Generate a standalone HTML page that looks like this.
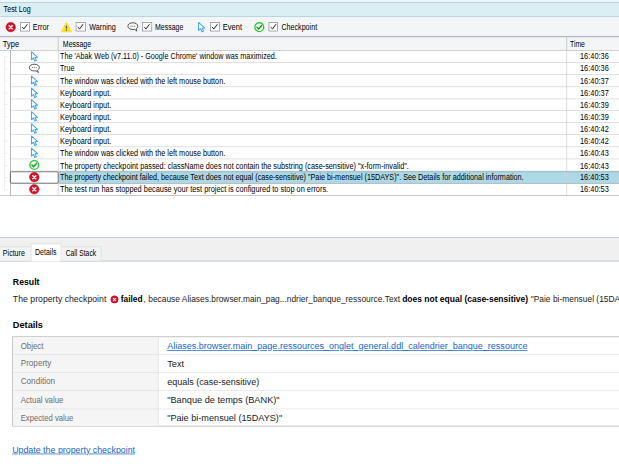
<!DOCTYPE html>
<html><head><meta charset="utf-8"><title>Test Log</title>
<style>
html,body{margin:0;padding:0;background:#fff;}
body{width:619px;height:464px;position:relative;overflow:hidden;}
#w{position:absolute;left:0;top:0;width:867px;height:650px;transform:scale(0.7143);transform-origin:0 0;font-family:"Liberation Sans",sans-serif;font-size:11.6px;color:#000;background:#fff;overflow:hidden}
.a{position:absolute;white-space:nowrap;}
.t{position:absolute;white-space:pre;line-height:1;transform-origin:0 0;}
.ic{position:absolute;display:block;}
.cb{position:absolute;width:11.3px;height:11.3px;border:1px solid #7f889c;background:#fff;box-shadow:0 0 0 1px #fbfbfc}
.cb svg{position:absolute;left:0;top:0;}
.u{text-decoration:underline;color:#1466c8;}
b{font-weight:bold}
</style></head><body><div id="w">

<div class="a" style="left:0px;top:0px;width:867px;height:3.3px;background:#f1f6f9"></div>
<div class="a" style="left:0px;top:3.3px;width:867px;height:20.2px;background:#dbeef3"></div>
<div class="a" style="left:0px;top:3.2px;width:867px;height:1px;background:#a4c9da"></div>
<div class="a" style="left:0px;top:22.5px;width:867px;height:1.1px;background:#8fbdd1"></div>
<div class="a" style="left:0px;top:23.6px;width:867px;height:28px;background:#f4f5f7"></div>
<svg class="ic" style="left:6.70px;top:29.80px" width="16" height="16" viewBox="0 0 16 16"><circle cx="8" cy="8" r="6.6" fill="#d3132b" stroke="#b4001a" stroke-width="0.8"/><path d="M5.9 5.9 L10.1 10.1 M10.1 5.9 L5.9 10.1" stroke="#fff" stroke-width="2.0" stroke-linecap="round"/></svg>
<div class="cb" style="left:28.49px;top:31.08px"><svg width="11" height="11" viewBox="0 0 11 11"><path d="M1.9 6.0 L4.5 8.5 L9.3 1.9" stroke="#151515" stroke-width="1.35" fill="none"/></svg></div>
<svg class="ic" style="left:84.96px;top:29.80px" width="16" height="16" viewBox="0 0 16 16"><path d="M8 1.6 L15 14.4 L1 14.4 Z" fill="#ffe01f" stroke="#ffe01f" stroke-width="1.4" stroke-linejoin="round"/><path d="M8 6 L8 10.2" stroke="#4c5a8c" stroke-width="1.7"/><circle cx="8" cy="12.3" r="1" fill="#4c5a8c"/></svg>
<div class="cb" style="left:106.33px;top:31.08px"><svg width="11" height="11" viewBox="0 0 11 11"><path d="M1.9 6.0 L4.5 8.5 L9.3 1.9" stroke="#151515" stroke-width="1.35" fill="none"/></svg></div>
<svg class="ic" style="left:178.20px;top:29.80px" width="16" height="16" viewBox="0 0 16 16"><path d="M8 1.9 C4 1.9 1 3.9 1 6.6 C1 9.3 4 11.3 8 11.3 C8.8 11.3 9.6 11.2 10.3 11.1 L13.8 13.5 L12.5 10.4 C14.1 9.5 15 8.2 15 6.6 C15 3.9 12 1.9 8 1.9 Z" fill="#fdfdfd" stroke="#4a4a4a" stroke-width="1.35" stroke-linejoin="round"/><circle cx="5.3" cy="6.6" r="0.8" fill="#666"/><circle cx="8" cy="6.6" r="0.8" fill="#666"/><circle cx="10.7" cy="6.6" r="0.8" fill="#666"/></svg>
<div class="cb" style="left:199.43px;top:31.08px"><svg width="11" height="11" viewBox="0 0 11 11"><path d="M1.9 6.0 L4.5 8.5 L9.3 1.9" stroke="#151515" stroke-width="1.35" fill="none"/></svg></div>
<svg class="ic" style="left:274.10px;top:29.80px" width="16" height="16" viewBox="0 0 16 16"><path d="M4 1.4 L4 12.6 L6.8 10.2 L8.8 14.6 L10.9 13.6 L9 9.4 L12.6 9.2 Z" fill="#fff" stroke="#3aa4ef" stroke-width="1.4" stroke-linejoin="round"/></svg>
<div class="cb" style="left:294.49px;top:31.08px"><svg width="11" height="11" viewBox="0 0 11 11"><path d="M1.9 6.0 L4.5 8.5 L9.3 1.9" stroke="#151515" stroke-width="1.35" fill="none"/></svg></div>
<svg class="ic" style="left:354.60px;top:29.80px" width="16" height="16" viewBox="0 0 16 16"><circle cx="8" cy="8" r="6.2" fill="#fff" stroke="#2ec63a" stroke-width="1.9"/><path d="M4.8 8.2 L7.1 10.5 L11.3 5.6" stroke="#18a824" stroke-width="2.3" fill="none" stroke-linecap="round" stroke-linejoin="round"/></svg>
<div class="cb" style="left:375.97px;top:31.08px"><svg width="11" height="11" viewBox="0 0 11 11"><path d="M1.9 6.0 L4.5 8.5 L9.3 1.9" stroke="#151515" stroke-width="1.35" fill="none"/></svg></div>
<div class="a" style="left:0px;top:49.5px;width:867px;height:2px;background:#e6e8ec"></div>
<div class="a" style="left:0px;top:51.2px;width:867px;height:19.5px;background:#f4f5f6;border-top:1.2px solid #8d94a6;border-bottom:1px solid #c0c0c0;box-sizing:border-box"></div>
<div class="a" style="left:81.2px;top:52.2px;width:1px;height:18.5px;background:#b8b8b8"></div>
<div class="a" style="left:792.8px;top:52.2px;width:1px;height:18.5px;background:#b8b8b8"></div>
<div class="a" style="left:15px;top:86.74px;width:852px;height:1px;background:#d4d4d4"></div>
<svg class="ic" style="left:40.02px;top:70.74px" width="16" height="16" viewBox="0 0 16 16"><path d="M4 1.4 L4 12.6 L6.8 10.2 L8.8 14.6 L10.9 13.6 L9 9.4 L12.6 9.2 Z" fill="#fff" stroke="#3aa4ef" stroke-width="1.4" stroke-linejoin="round"/></svg>
<div class="a" style="left:6.3px;top:78.74px;width:5.5px;height:1px;background:#e9e9e9"></div>
<div class="a" style="left:15px;top:103.673px;width:852px;height:1px;background:#d4d4d4"></div>
<svg class="ic" style="left:40.02px;top:87.67px" width="16" height="16" viewBox="0 0 16 16"><path d="M8 1.9 C4 1.9 1 3.9 1 6.6 C1 9.3 4 11.3 8 11.3 C8.8 11.3 9.6 11.2 10.3 11.1 L13.8 13.5 L12.5 10.4 C14.1 9.5 15 8.2 15 6.6 C15 3.9 12 1.9 8 1.9 Z" fill="#fdfdfd" stroke="#4a4a4a" stroke-width="1.35" stroke-linejoin="round"/><circle cx="5.3" cy="6.6" r="0.8" fill="#666"/><circle cx="8" cy="6.6" r="0.8" fill="#666"/><circle cx="10.7" cy="6.6" r="0.8" fill="#666"/></svg>
<div class="a" style="left:6.3px;top:95.673px;width:5.5px;height:1px;background:#e9e9e9"></div>
<div class="a" style="left:15px;top:120.606px;width:852px;height:1px;background:#d4d4d4"></div>
<svg class="ic" style="left:40.02px;top:104.61px" width="16" height="16" viewBox="0 0 16 16"><path d="M4 1.4 L4 12.6 L6.8 10.2 L8.8 14.6 L10.9 13.6 L9 9.4 L12.6 9.2 Z" fill="#fff" stroke="#3aa4ef" stroke-width="1.4" stroke-linejoin="round"/></svg>
<div class="a" style="left:6.3px;top:112.606px;width:5.5px;height:1px;background:#e9e9e9"></div>
<div class="a" style="left:15px;top:137.539px;width:852px;height:1px;background:#d4d4d4"></div>
<svg class="ic" style="left:40.02px;top:121.54px" width="16" height="16" viewBox="0 0 16 16"><path d="M4 1.4 L4 12.6 L6.8 10.2 L8.8 14.6 L10.9 13.6 L9 9.4 L12.6 9.2 Z" fill="#fff" stroke="#3aa4ef" stroke-width="1.4" stroke-linejoin="round"/></svg>
<div class="a" style="left:6.3px;top:129.539px;width:5.5px;height:1px;background:#e9e9e9"></div>
<div class="a" style="left:15px;top:154.47199999999998px;width:852px;height:1px;background:#d4d4d4"></div>
<svg class="ic" style="left:40.02px;top:138.47px" width="16" height="16" viewBox="0 0 16 16"><path d="M4 1.4 L4 12.6 L6.8 10.2 L8.8 14.6 L10.9 13.6 L9 9.4 L12.6 9.2 Z" fill="#fff" stroke="#3aa4ef" stroke-width="1.4" stroke-linejoin="round"/></svg>
<div class="a" style="left:6.3px;top:146.47199999999998px;width:5.5px;height:1px;background:#e9e9e9"></div>
<div class="a" style="left:15px;top:171.40499999999997px;width:852px;height:1px;background:#d4d4d4"></div>
<svg class="ic" style="left:40.02px;top:155.40px" width="16" height="16" viewBox="0 0 16 16"><path d="M4 1.4 L4 12.6 L6.8 10.2 L8.8 14.6 L10.9 13.6 L9 9.4 L12.6 9.2 Z" fill="#fff" stroke="#3aa4ef" stroke-width="1.4" stroke-linejoin="round"/></svg>
<div class="a" style="left:6.3px;top:163.40499999999997px;width:5.5px;height:1px;background:#e9e9e9"></div>
<div class="a" style="left:15px;top:188.338px;width:852px;height:1px;background:#d4d4d4"></div>
<svg class="ic" style="left:40.02px;top:172.34px" width="16" height="16" viewBox="0 0 16 16"><path d="M4 1.4 L4 12.6 L6.8 10.2 L8.8 14.6 L10.9 13.6 L9 9.4 L12.6 9.2 Z" fill="#fff" stroke="#3aa4ef" stroke-width="1.4" stroke-linejoin="round"/></svg>
<div class="a" style="left:6.3px;top:180.338px;width:5.5px;height:1px;background:#e9e9e9"></div>
<div class="a" style="left:15px;top:205.27100000000002px;width:852px;height:1px;background:#d4d4d4"></div>
<svg class="ic" style="left:40.02px;top:189.27px" width="16" height="16" viewBox="0 0 16 16"><path d="M4 1.4 L4 12.6 L6.8 10.2 L8.8 14.6 L10.9 13.6 L9 9.4 L12.6 9.2 Z" fill="#fff" stroke="#3aa4ef" stroke-width="1.4" stroke-linejoin="round"/></svg>
<div class="a" style="left:6.3px;top:197.27100000000002px;width:5.5px;height:1px;background:#e9e9e9"></div>
<div class="a" style="left:15px;top:222.204px;width:852px;height:1px;background:#d4d4d4"></div>
<svg class="ic" style="left:40.02px;top:206.20px" width="16" height="16" viewBox="0 0 16 16"><path d="M4 1.4 L4 12.6 L6.8 10.2 L8.8 14.6 L10.9 13.6 L9 9.4 L12.6 9.2 Z" fill="#fff" stroke="#3aa4ef" stroke-width="1.4" stroke-linejoin="round"/></svg>
<div class="a" style="left:6.3px;top:214.204px;width:5.5px;height:1px;background:#e9e9e9"></div>
<div class="a" style="left:15px;top:239.137px;width:852px;height:1px;background:#d4d4d4"></div>
<svg class="ic" style="left:40.02px;top:223.14px" width="16" height="16" viewBox="0 0 16 16"><circle cx="8" cy="8" r="6.2" fill="#fff" stroke="#2ec63a" stroke-width="1.9"/><path d="M4.8 8.2 L7.1 10.5 L11.3 5.6" stroke="#18a824" stroke-width="2.3" fill="none" stroke-linecap="round" stroke-linejoin="round"/></svg>
<div class="a" style="left:6.3px;top:231.137px;width:5.5px;height:1px;background:#e9e9e9"></div>
<div class="a" style="left:82px;top:240.07px;width:785px;height:16px;background:#add8e6"></div>
<div class="a" style="left:15px;top:256.07px;width:852px;height:1px;background:#d4d4d4"></div>
<svg class="ic" style="left:40.02px;top:240.07px" width="16" height="16" viewBox="0 0 16 16"><circle cx="8" cy="8" r="6.6" fill="#d3132b" stroke="#b4001a" stroke-width="0.8"/><path d="M5.9 5.9 L10.1 10.1 M10.1 5.9 L5.9 10.1" stroke="#fff" stroke-width="2.0" stroke-linecap="round"/></svg>
<div class="a" style="left:6.3px;top:248.07px;width:5.5px;height:1px;background:#e9e9e9"></div>
<div class="a" style="left:15px;top:273.003px;width:852px;height:1px;background:#d4d4d4"></div>
<svg class="ic" style="left:40.02px;top:257.00px" width="16" height="16" viewBox="0 0 16 16"><circle cx="8" cy="8" r="6.6" fill="#d3132b" stroke="#b4001a" stroke-width="0.8"/><path d="M5.9 5.9 L10.1 10.1 M10.1 5.9 L5.9 10.1" stroke="#fff" stroke-width="2.0" stroke-linecap="round"/></svg>
<div class="a" style="left:6.3px;top:265.003px;width:5.5px;height:1px;background:#e9e9e9"></div>
<div class="a" style="left:14.2px;top:69.74px;width:1px;height:204.196px;background:#9c9c9c"></div>
<div class="a" style="left:6.3px;top:78.74px;width:1px;height:186.263px;background:#e9e9e9"></div>
<div class="a" style="left:81.2px;top:70.74px;width:1px;height:203.196px;background:#cfcfcf"></div>
<div class="a" style="left:792.8px;top:70.74px;width:1px;height:203.196px;background:#cfcfcf"></div>
<div class="a" style="left:0px;top:272.936px;width:867px;height:1px;background:#bdbdbd"></div>
<div class="a" style="left:14.2px;top:240.07px;width:67.5px;height:17px;border:1px solid #4a4a4a;border-radius:2px;box-sizing:border-box"></div>
<div class="a" style="left:82px;top:239.87px;width:785px;height:1px;background:#8aa9b5"></div>
<div class="a" style="left:82px;top:256.07px;width:785px;height:1px;background:#8aa9b5"></div>
<div class="a" style="left:0px;top:332.0px;width:867px;height:34px;background:#f0f0f0;border-top:1px solid #b4bccf;border-bottom:1px solid #aab3c6;box-sizing:border-box"></div>
<div class="a" style="left:0px;top:345.0px;width:43px;height:20px;background:#f3f3f3;border-top:1px solid #dadada;box-sizing:border-box"></div>
<div class="a" style="left:43px;top:341.0px;width:43px;height:25px;background:#fff;border:1px solid #d5d5d5;border-bottom:none;box-sizing:border-box"></div>
<div class="a" style="left:86px;top:345.0px;width:56px;height:20px;background:#f3f3f3;border:1px solid #dadada;border-left:none;border-bottom:none;box-sizing:border-box"></div>
<svg class="ic" style="left:154.28px;top:412.58px" width="12.6" height="12.6" viewBox="0 0 16 16"><circle cx="8" cy="8" r="6.6" fill="#d3132b" stroke="#b4001a" stroke-width="0.8"/><path d="M5.9 5.9 L10.1 10.1 M10.1 5.9 L5.9 10.1" stroke="#fff" stroke-width="2.0" stroke-linecap="round"/></svg>
<div class="a" style="left:16.8px;top:470.68px;width:896.0px;height:126.42px;border:1px solid #ababab;box-sizing:border-box;background:#fff"></div>
<div class="a" style="left:17.78px;top:471.66px;width:204.4px;height:124.46px;background:#f5f5f5;border-right:1px solid #dcdcdc;box-sizing:border-box"></div>
<div class="a" style="left:17.78px;top:496.02px;width:868.0px;height:1.01px;background:#e2e2e2"></div>
<div class="a" style="left:17.78px;top:521.22px;width:868.0px;height:1.01px;background:#e2e2e2"></div>
<div class="a" style="left:17.78px;top:546.42px;width:868.0px;height:1.01px;background:#e2e2e2"></div>
<div class="a" style="left:17.78px;top:571.62px;width:868.0px;height:1.01px;background:#e2e2e2"></div>
<div class="t" style="left:4.9px;top:7.31px;font-size:12.2px;transform:scaleX(0.8217);">Test Log</div>
<div class="t" style="left:46.2px;top:31.53px;font-size:12.2px;transform:scaleX(0.8296);">Error</div>
<div class="t" style="left:124.88px;top:31.53px;font-size:12.2px;transform:scaleX(0.8244);">Warning</div>
<div class="t" style="left:217.0px;top:31.53px;font-size:12.2px;transform:scaleX(0.8000);">Message</div>
<div class="t" style="left:312.2px;top:31.53px;font-size:12.2px;transform:scaleX(0.8581);">Event</div>
<div class="t" style="left:393.82px;top:31.53px;font-size:12.2px;transform:scaleX(0.8193);">Checkpoint</div>
<div class="t" style="left:4.2px;top:55.61px;font-size:12.2px;transform:scaleX(0.8615);">Type</div>
<div class="t" style="left:87.5px;top:55.61px;font-size:12.2px;transform:scaleX(0.8000);">Message</div>
<div class="t" style="left:798.0px;top:55.61px;font-size:12.2px;transform:scaleX(0.7778);">Time</div>
<div class="t" style="left:84.0px;top:73.16px;font-size:12.2px;transform:scaleX(0.8278);">The 'Abak Web (v7.11.0) - Google Chrome' window was maximized.</div>
<div class="t" style="left:811.72px;top:73.16px;font-size:12.2px;transform:scaleX(0.8489);">16:40:36</div>
<div class="t" style="left:84.0px;top:90.09px;font-size:12.2px;transform:scaleX(0.8176);">True</div>
<div class="t" style="left:811.72px;top:90.09px;font-size:12.2px;transform:scaleX(0.8489);">16:40:36</div>
<div class="t" style="left:84.0px;top:107.03px;font-size:12.2px;transform:scaleX(0.8370);">The window was clicked with the left mouse button.</div>
<div class="t" style="left:811.72px;top:107.03px;font-size:12.2px;transform:scaleX(0.8489);">16:40:37</div>
<div class="t" style="left:84.0px;top:123.96px;font-size:12.2px;transform:scaleX(0.8400);">Keyboard input.</div>
<div class="t" style="left:811.72px;top:123.96px;font-size:12.2px;transform:scaleX(0.8489);">16:40:37</div>
<div class="t" style="left:84.0px;top:140.89px;font-size:12.2px;transform:scaleX(0.8400);">Keyboard input.</div>
<div class="t" style="left:811.72px;top:140.89px;font-size:12.2px;transform:scaleX(0.8489);">16:40:39</div>
<div class="t" style="left:84.0px;top:157.82px;font-size:12.2px;transform:scaleX(0.8400);">Keyboard input.</div>
<div class="t" style="left:811.72px;top:157.82px;font-size:12.2px;transform:scaleX(0.8489);">16:40:39</div>
<div class="t" style="left:84.0px;top:174.76px;font-size:12.2px;transform:scaleX(0.8400);">Keyboard input.</div>
<div class="t" style="left:811.72px;top:174.76px;font-size:12.2px;transform:scaleX(0.8489);">16:40:42</div>
<div class="t" style="left:84.0px;top:191.69px;font-size:12.2px;transform:scaleX(0.8400);">Keyboard input.</div>
<div class="t" style="left:811.72px;top:191.69px;font-size:12.2px;transform:scaleX(0.8489);">16:40:42</div>
<div class="t" style="left:84.0px;top:208.62px;font-size:12.2px;transform:scaleX(0.8370);">The window was clicked with the left mouse button.</div>
<div class="t" style="left:811.72px;top:208.62px;font-size:12.2px;transform:scaleX(0.8489);">16:40:43</div>
<div class="t" style="left:84.0px;top:225.56px;font-size:12.2px;transform:scaleX(0.8366);">The property checkpoint passed: className does not contain the substring (case-sensitive) &quot;x-form-invalid&quot;.</div>
<div class="t" style="left:811.72px;top:225.56px;font-size:12.2px;transform:scaleX(0.8489);">16:40:43</div>
<div class="t" style="left:84.0px;top:242.49px;font-size:12.2px;transform:scaleX(0.8323);">The property checkpoint failed, because Text does not equal (case-sensitive) &quot;Paie bi-mensuel (15DAYS)&quot;. See Details for additional information.</div>
<div class="t" style="left:811.72px;top:242.49px;font-size:12.2px;transform:scaleX(0.8489);">16:40:53</div>
<div class="t" style="left:84.0px;top:259.42px;font-size:12.2px;transform:scaleX(0.8486);">The test run has stopped because your test project is configured to stop on errors.</div>
<div class="t" style="left:811.72px;top:259.42px;font-size:12.2px;transform:scaleX(0.8489);">16:40:53</div>
<div class="t" style="left:4.2px;top:347.51px;font-size:12.2px;transform:scaleX(0.8105);">Picture</div>
<div class="t" style="left:48.58px;top:346.67px;font-size:12.2px;transform:scaleX(0.8059);">Details</div>
<div class="t" style="left:91.7px;top:347.51px;font-size:12.2px;transform:scaleX(0.7764);">Call Stack</div>
<div class="t" style="left:17.5px;top:388.89px;font-size:12.600000000000001px;transform:scaleX(0.9692);"><b>Result</b></div>
<div class="t" style="left:17.5px;top:412.95px;font-size:12.3px;transform:scaleX(0.9917);color:#222">The property checkpoint</div>
<div class="t" style="left:168.98px;top:412.95px;font-size:12.3px;transform:scaleX(0.9537);"><b>failed</b></div>
<div class="t" style="left:200.76px;top:412.95px;font-size:12.3px;transform:scaleX(0.9554);color:#222">, because Aliases.browser.main_pag...ndrier_banque_ressource.Text</div>
<div class="t" style="left:563.36px;top:412.95px;font-size:12.3px;transform:scaleX(0.9662);"><b>does not equal (case-sensitive)</b></div>
<div class="t" style="left:743.4px;top:412.95px;font-size:12.3px;transform:scaleX(0.9574);color:#222">&quot;Paie bi-mensuel (15DAYS)&quot;</div>
<div class="t" style="left:17.64px;top:448.53px;font-size:12.600000000000001px;transform:scaleX(1.0210);"><b>Details</b></div>
<div class="t" style="left:29.4px;top:477.91px;font-size:12.3px;transform:scaleX(0.8944);color:#6e6e6e">Object</div>
<div class="t" style="left:233.52px;top:477.57px;font-size:13.200000000000001px;transform:scaleX(0.9569);color:#222"><span class="u">Aliases.browser.main_page.ressources_onglet_general.ddl_calendrier_banque_ressource</span></div>
<div class="t" style="left:29.4px;top:503.11px;font-size:12.3px;transform:scaleX(0.9252);color:#6e6e6e">Property</div>
<div class="t" style="left:233.52px;top:502.77px;font-size:13.200000000000001px;transform:scaleX(0.9800);color:#222">Text</div>
<div class="t" style="left:29.4px;top:528.31px;font-size:12.3px;transform:scaleX(0.9262);color:#6e6e6e">Condition</div>
<div class="t" style="left:233.52px;top:527.97px;font-size:13.200000000000001px;transform:scaleX(0.9551);color:#222">equals (case-sensitive)</div>
<div class="t" style="left:29.4px;top:553.51px;font-size:12.3px;transform:scaleX(0.8922);color:#6e6e6e">Actual value</div>
<div class="t" style="left:233.52px;top:553.17px;font-size:13.200000000000001px;transform:scaleX(0.9774);color:#222">&quot;Banque de temps (BANK)&quot;</div>
<div class="t" style="left:29.4px;top:578.71px;font-size:12.3px;transform:scaleX(0.8767);color:#6e6e6e">Expected value</div>
<div class="t" style="left:233.52px;top:578.37px;font-size:13.200000000000001px;transform:scaleX(0.9699);color:#222">&quot;Paie bi-mensuel (15DAYS)&quot;</div>
<div class="t" style="left:17.22px;top:623.79px;font-size:12.3px;transform:scaleX(1.0070);"><span class="u">Update the property checkpoint</span></div>
</div></body></html>
